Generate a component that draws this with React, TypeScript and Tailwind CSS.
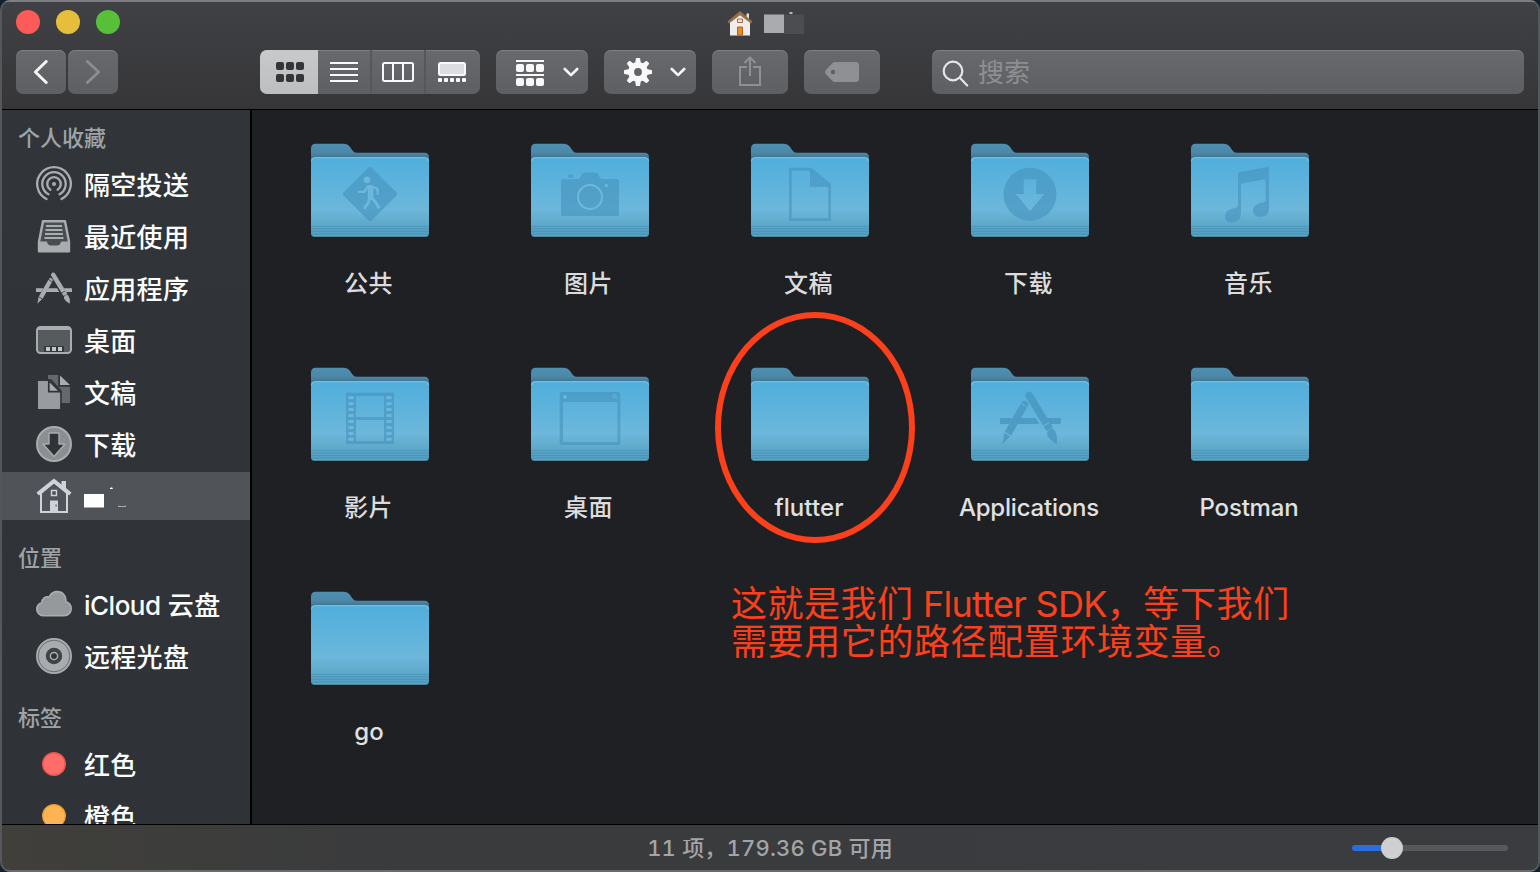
import type { ReactNode } from "react";

const FONT = "font-['Inter','Noto_Sans_CJK_SC',sans-serif]";

/* ---------- toolbar ---------- */

function ToolButton({ className, children }: { className: string; children: ReactNode }) {
  return (
    <div
      className={`flex h-11 shrink-0 items-center overflow-hidden rounded-[7px] bg-linear-to-b from-[#68696c] to-[#5e5f62] shadow-[inset_0_1px_0_#7d7e81] ${className}`}
    >
      {children}
    </div>
  );
}

function ChevronDown() {
  return (
    <svg className="h-4 w-4" viewBox="0 0 16 16" fill="none" stroke="#f6f6f8" strokeWidth="2.6" strokeLinecap="round" strokeLinejoin="round">
      <path d="M1.8 5 8 11.2 14.2 5" />
    </svg>
  );
}

function HouseEmoji() {
  return (
    <svg className="h-[25px] w-[26px]" viewBox="0 0 26 25">
      <path d="M19.500 2.500h2.500v7h-2.500z" fill="#e3e3e3" />
      <path d="M3 11 13 2.500 23 11v13.500H3z" fill="#efeeed" />
      <path d="M13 0 .5 10.500 2 12.600 13 4.200l11 8.400 1.500-2.100z" fill="#94704c" />
      <path d="M10.500 8h5v3.500h-5z" fill="#f4e3d4" stroke="#a8693a" />
      <path d="M10.500 16h5v8h-5z" fill="#e98a2b" stroke="#b1611c" />
    </svg>
  );
}

function GearIcon() {
  const teeth = [0, 45, 90, 135, 180, 225, 270, 315];
  return (
    <svg className="h-7 w-7" viewBox="-14 -14 28 28">
      <g fill="#f8f8fa">
        {teeth.map((a) => (
          <path key={a} d="M-2.9-8.5-2.1-13.4Q-2-14-1.4-14H1.4Q2-14 2.1-13.4L2.9-8.5Z" transform={`rotate(${a})`} />
        ))}
      </g>
      <circle r="6.9" fill="none" stroke="#f8f8fa" strokeWidth="6" />
    </svg>
  );
}

function Toolbar() {
  return (
    <header className="flex h-[108px] shrink-0 flex-col border-b border-black bg-linear-to-b from-[#404144] to-[#363639]">
      <div className="grid h-10 grid-cols-3 items-center">
        <div className="flex gap-4 pl-[14px]">
          <span className="h-6 w-6 rounded-full bg-[#fc5b57]" />
          <span className="h-6 w-6 rounded-full bg-[#e5bf3c]" />
          <span className="h-6 w-6 rounded-full bg-[#57c038]" />
        </div>
        <div className="flex items-center justify-center pt-[2px] pr-[8px]">
          <div className="mr-[10px]">
            <HouseEmoji />
          </div>
          <svg className="h-6 w-[42px]" viewBox="0 0 42 24">
            <path d="M1 3.500h20V22H1z" fill="#aaabaf" />
            <path d="M21 3.500h20V23H21z" fill="#4c4d50" />
            <path d="M26.500 1h3v2h-3z" fill="#b6b7ba" />
          </svg>
        </div>
      </div>
      <div className="flex px-[14px] pt-2">
        <ToolButton className="mr-[2px] w-[50px] justify-center">
          <svg className="h-6 w-4" viewBox="0 0 16 24" fill="none" stroke="#f4f4f5" strokeWidth="3" strokeLinecap="round" strokeLinejoin="round">
            <path d="M13.200 1.500 2.400 12 13.200 22.500" />
          </svg>
        </ToolButton>
        <ToolButton className="mr-[142px] w-[50px] justify-center">
          <svg className="h-6 w-4" viewBox="0 0 16 24" fill="none" stroke="#8c8d90" strokeWidth="2.800" strokeLinecap="round" strokeLinejoin="round">
            <path d="M2.400 1.500 13.600 12 2.400 22.500" />
          </svg>
        </ToolButton>
        <ToolButton className="mr-4 w-[220px]">
          <div className="flex h-full w-[58px] items-center justify-center bg-linear-to-b from-[#c8c9cb] to-[#bdbec0] pl-[2px]">
            <svg className="h-5 w-7" viewBox="0 0 28 20" fill="#343538">
              {[0, 10, 20].map((x) => (
                <g key={x}>
                  <rect x={x} width="8" height="8" rx="2" />
                  <rect x={x} y="12" width="8" height="8" rx="2" />
                </g>
              ))}
            </svg>
          </div>
          <div className="flex h-full w-[54px] items-center justify-center border-r-2 border-[#56575a]">
            <svg className="h-5 w-7" viewBox="0 0 28 20" fill="#f8f8fa">
              <path d="M0 0h28v2H0zM0 6h28v2H0zM0 12h28v2H0zM0 18h28v2H0z" />
            </svg>
          </div>
          <div className="flex h-full w-[54px] items-center justify-center border-r-2 border-[#56575a]">
            <svg className="h-5 w-8" viewBox="0 0 32 20" fill="none" stroke="#f8f8fa" strokeWidth="2">
              <rect x="1" y="1" width="30" height="18" rx="1.500" />
              <path d="M11 1v18M21 1v18" />
            </svg>
          </div>
          <div className="flex h-full w-[52px] items-center justify-center">
            <svg className="h-5 w-7" viewBox="0 0 28 20">
              <rect x="1" y="1" width="26" height="12" rx="1.500" fill="#dcdde0" stroke="#f8f8fa" strokeWidth="2" />
              {[0, 6, 12, 18, 24].map((x) => (
                <rect key={x} x={x} y="16" width="4" height="4" rx="1" fill="#f8f8fa" />
              ))}
            </svg>
          </div>
        </ToolButton>
        <ToolButton className="mr-4 w-[92px] justify-between pl-5 pr-[9px]">
          <svg className="mt-[2px] h-[26px] w-7" viewBox="0 0 28 26" fill="#f8f8fa">
            <path d="M0 0h28v2H0zM0 14h28v2H0z" />
            {[0, 10, 20].map((x) => (
              <g key={x}>
                <rect x={x} y="4" width="8" height="8" rx="2" />
                <rect x={x} y="18" width="8" height="8" rx="2" />
              </g>
            ))}
          </svg>
          <ChevronDown />
        </ToolButton>
        <ToolButton className="mr-4 w-[92px] justify-between pl-5 pr-[10px]">
          <GearIcon />
          <ChevronDown />
        </ToolButton>
        <ToolButton className="mr-4 w-[76px] justify-center">
          <svg className="mb-[2px] h-[30px] w-[22px]" viewBox="0 0 22 30" fill="none" stroke="#8f9093" strokeWidth="2">
            <path d="M8 11H1v18h20V11h-7M11 20V1.500M5.500 7 11 1.500 16.500 7" />
          </svg>
        </ToolButton>
        <ToolButton className="mr-[52px] w-[76px] justify-center">
          <svg className="h-5 w-[34px]" viewBox="0 0 34 20">
            <path d="M10 0h21q3 0 3 3v14q0 3-3 3H10Q8.500 20 7.500 19L.8 12Q-.8 10 .8 8L7.500 1Q8.500 0 10 0z" fill="#8f9093" />
            <circle cx="8" cy="10" r="2.200" fill="#5f6063" />
          </svg>
        </ToolButton>
        <ToolButton className="w-[592px] pl-[10px]">
          <svg className="mt-[2px] h-[27px] w-[27px]" viewBox="0 0 27 27" fill="none" stroke="#e6e6e8" strokeWidth="2.200" strokeLinecap="round">
            <circle cx="11" cy="11" r="9.300" />
            <path d="m17.800 17.800 7.400 7.600" />
          </svg>
          <span className="mt-[2px] ml-[9px] text-[26px] leading-none text-[#8e8f92]">搜索</span>
        </ToolButton>
      </div>
    </header>
  );
}

/* ---------- shared drawing ---------- */

function AppsDrawing() {
  return (
    <g>
      <path d="M30 52h12.500l-3.500 6H30zM50.500 52h15.200l3.500 6H47.200zM76.500 52h14.200v6H79.800z" />
      <path d="M55.600 30.800q-1.200-3 1.800-4.900 3.200-1.400 5 1.500L79.600 55.800l-6.600 3.700z" />
      <path d="m73.600 60.400 6.500-3.700 2.700 4.900-6.200 3.500z" />
      <path d="M77.200 66q3-3.800 6-3.200 5 5.200 3.600 15.200-7.400-4.400-9.600-9z" />
      <path d="m51.600 36.200 1-1.200q2.200-.8 4.600.8 1.600 1.600 1 3.600l-1 1.600z" />
      <path d="m50.900 37.400 6 4.400L41.200 69.400l-6.400-3.700z" />
      <path d="m34.300 66.800 5.800 3.500-7.600 7.400z" />
    </g>
  );
}

/* ---------- sidebar ---------- */

const ICON = "#a9adb0";

const sideIcons: Record<string, ReactNode> = {
  airdrop: (
    <g fill="none" stroke={ICON} strokeWidth="2.300" strokeLinecap="round">
      <circle cx="18" cy="18" r="2" fill={ICON} stroke="none" />
      <path d="M10.500 33A16.800 16.800 0 1 1 25.500 33" />
      <path d="M12.500 28.200A11.700 11.700 0 1 1 23.500 28.200" />
      <path d="M14.400 23.700A6.800 6.800 0 1 1 21.600 23.700" />
    </g>
  ),
  recents: (
    <g>
      <path d="M7 3.200h22l4 20.500v9.500H3v-9.500z" fill="#484d50" stroke={ICON} strokeWidth="2.400" strokeLinejoin="round" />
      <path d="M3 23.500h8q.5 4 4 4h6q3.500 0 4-4h8v9.700H3z" fill={ICON} />
      <path d="M10 8h16M9.500 12h17M9 16h18M8.500 20h19" stroke={ICON} strokeWidth="1.900" />
    </g>
  ),
  apps: (
    <g fill={ICON} transform="translate(-17.800 -12.500) scale(.593)">
      <AppsDrawing />
    </g>
  ),
  desktop: (
    <g>
      <rect x="1" y="5" width="34" height="26" rx="3.500" fill="#565b5e" stroke={ICON} strokeWidth="2" />
      <path d="M2 5.500h32V8H2z" fill={ICON} />
      <path d="M8 24h20v6H8z" fill="#34383b" />
      <path d="M10 25h4v4h-4zM16 25h4v4h-4zM22 25h4v4h-4z" fill="#c4c7c9" />
    </g>
  ),
  documents: (
    <g>
      <path d="M12 1h11v11h11v17H12z" fill="#65696c" />
      <path d="M24 1.500V11h10z" fill={ICON} />
      <path d="M23 0v12h11.500" fill="none" stroke="#303438" strokeWidth="1.500" />
      <path d="M2 7h10l12.500 12v16H2z" fill="#989ca0" />
      <path d="M12.500 6H15l10 11v18" fill="none" stroke="#303438" strokeWidth="1.600" />
      <path d="M12.800 6.500v11.200H24z" fill="#a9adb0" stroke="#303438" strokeWidth="1.700" />
    </g>
  ),
  downloads: (
    <g>
      <circle cx="18" cy="18" r="17" fill="#8b8f92" stroke={ICON} strokeWidth="2" />
      <path d="M13 7h10v11h6L18 30.500 7 18h6z" fill="#303438" stroke={ICON} strokeWidth="1.400" strokeLinejoin="round" />
    </g>
  ),
  home: (
    <g>
      <path d="M25.500 3h4.500v10h-4.500z" fill="#cfd2da" />
      <path d="M5 15v19h26V15L18 4z" fill="#50535a" stroke="#cfd2da" strokeWidth="2" />
      <path d="M18 .5.500 14.500l2.300 3L18 5.500l15.200 12 2.300-3z" fill="#cfd2da" />
      <path d="M15.500 12.500h5v5h-5z" fill="none" stroke="#cfd2da" strokeWidth="1.400" />
      <path d="M14 22.500h8V34h-8z" fill="#cfd2da" />
      <path d="M19.500 26.500h1.200v2h-1.200z" fill="#50535a" />
    </g>
  ),
  cloud: (
    <path
      d="M8 29.800C3.800 29.800.8 26.800.8 23.200c0-3 1.900-5.600 5-6.500C5.800 12.600 9.500 9.800 13.200 11 14.600 7.800 17.800 5.600 21.400 5.600c5.200 0 9 4.300 8.400 10.200 3.300.8 5.400 3.700 5.400 7 0 3.900-3 7-7.200 7z"
      fill="#96999c"
      stroke={ICON}
      strokeWidth="1.600"
    />
  ),
  disc: (
    <g>
      <circle cx="18" cy="18" r="17.200" fill="#a9acaf" stroke={ICON} strokeWidth="1.600" />
      <circle cx="18" cy="18" r="15.800" fill="none" stroke="#64686b" strokeWidth=".9" />
      <circle cx="18" cy="18" r="8.200" fill="#3f4346" />
      <circle cx="18" cy="18" r="3.600" fill="#303438" stroke={ICON} strokeWidth="1.500" />
    </g>
  ),
  red: <circle cx="18" cy="18" r="11.300" fill="#fe6d67" stroke="#ee514c" strokeWidth="1.400" />,
  orange: <circle cx="18" cy="18" r="11.300" fill="#feb453" stroke="#ee9f34" strokeWidth="1.400" />,
};

function Heading({ first, children }: { first?: boolean; children: ReactNode }) {
  return (
    <h2
      className={`flex shrink-0 items-end pb-2 pl-4 text-[22px] leading-7 font-medium text-[#9fa3a6] ${first ? "h-[50px]" : "h-[56px]"}`}
    >
      {children}
    </h2>
  );
}

function SideItem({ icon, selected, children }: { icon: string; selected?: boolean; children: ReactNode }) {
  return (
    <div className={`mb-1 flex h-12 shrink-0 items-center pl-[34px] ${selected ? "bg-[#505358]" : ""}`}>
      <svg className="mr-3 h-9 w-9 shrink-0" viewBox="0 0 36 36">
        {sideIcons[icon]}
      </svg>
      <span className="mt-[3px] text-[26px] leading-none font-medium tracking-[0.3px] whitespace-nowrap text-[#fbfcfc]">
        {children}
      </span>
    </div>
  );
}

function Sidebar() {
  return (
    <aside className="flex w-[250px] shrink-0 flex-col overflow-hidden border-r-2 border-black bg-linear-to-b from-[#313539] to-[#2f3337]">
      <Heading first>个人收藏</Heading>
      <SideItem icon="airdrop">隔空投送</SideItem>
      <SideItem icon="recents">最近使用</SideItem>
      <SideItem icon="apps">应用程序</SideItem>
      <SideItem icon="desktop">桌面</SideItem>
      <SideItem icon="documents">文稿</SideItem>
      <SideItem icon="downloads">下载</SideItem>
      <SideItem icon="home" selected>
        <svg className="h-[26px] w-11" viewBox="0 0 44 26" fill="#fff">
          <path d="M0 9h20v13.500H0zM26 3l2-.8 1 1.800h-3zM34 20.500q4 2.200 8 0v.8q-4 1.400-8 0z" />
        </svg>
      </SideItem>
      <Heading>位置</Heading>
      <SideItem icon="cloud">
        <span className="tracking-[-0.5px]">iCloud</span> 云盘
      </SideItem>
      <SideItem icon="disc">远程光盘</SideItem>
      <Heading>标签</Heading>
      <SideItem icon="red">红色</SideItem>
      <SideItem icon="orange">橙色</SideItem>
    </aside>
  );
}

/* ---------- folders ---------- */

const EMB = "#4795bf";
const EMBO = 0.66;

const emblems: Record<string, ReactNode> = {
  none: null,
  public: (
    <g>
      <path d="M58.500 25.500q1.500-1.500 3 0L86.500 50.500q1.500 1.500 0 3L61.500 78.500q-1.500 1.500-3 0L33.500 53.500q-1.500-1.500 0-3z" fill={EMB} opacity={EMBO} />
      <circle cx="57" cy="37.800" r="3.200" fill="#6cb8dd" />
      <g fill="none" stroke="#6cb8dd" strokeLinecap="round" strokeLinejoin="round">
        <path d="M49 49.800h5.200l3.600-5.300h4l5.600 2.300.4 5" strokeWidth="2.300" />
        <path d="M60.600 45.800v9.200" strokeWidth="5.600" />
        <path d="M59.500 56l-1.200 5-3.600 4.600M62 56l3.500 4.200 3.200 5.400" strokeWidth="2.900" />
      </g>
    </g>
  ),
  pictures: (
    <g>
      <path
        d="M33 37h14q3 0 4-3 1-3.300 4-3.300h10q3 0 4 3.300 1 3 4 3h14q2 0 2 2v33q0 2-2 2H33q-2 0-2-2V39q0-2 2-2zM39 32.700h3.500q1 0 1 1.500t-1 1.500H39q-1 0-1-1.500t1-1.500z"
        fill={EMB}
        opacity={EMBO}
      />
      <circle cx="60" cy="55" r="12" fill="none" stroke="#6cb8dd" strokeWidth="2" />
      <circle cx="76.300" cy="43.600" r="1.600" fill="#6cb8dd" />
    </g>
  ),
  documents: (
    <g fill={EMB} opacity={EMBO}>
      <path fillRule="evenodd" d="M39 25.700h22.500L81 42v37H39zM41.700 28.400v47.900h36.600V47.200q0-2.500-2.500-2.500H60V29.500q0-1.100-1.200-1.100z" />
    </g>
  ),
  downloads: (
    <path
      fillRule="evenodd"
      d="M60 25.800a26.500 26.500 0 1 1 0 53 26.500 26.500 0 1 1 0-53zM53.700 37.300V52h-8L60 69.300 74.300 52h-8V37.300z"
      fill={EMB}
      opacity={EMBO}
    />
  ),
  music: (
    <path
      fillRule="evenodd"
      d="M48 31.800q0-1.200 1.200-1.500L77.500 25q1.500-.3 1.500 1V66q0 8.800-8.500 8.800-7.500 0-7.500-6 0-6.500 9-8.200 3.600-.5 3.600-2.800V37.300L51 41.600V71q0 9-8.500 9.200-7.500 0-7.500-6 0-6.500 9.200-8 3.800-.5 3.800-2.800z"
      fill={EMB}
      opacity={EMBO}
    />
  ),
  movies: (
    <g>
      <path
        fillRule="evenodd"
        d="M36 26.700h48V78H36zM46 30v21h28V30zM46 54v21h28V54z"
        fill={EMB}
        opacity={EMBO}
      />
      {[0, 1, 2, 3, 4, 5, 6, 7].map((i) => (
        <g key={i} fill="#6cb8dd">
          <rect x="38.300" y={30.2 + i * 5.95} width="5.400" height="3" rx=".8" />
          <rect x="76.300" y={30.2 + i * 5.95} width="5.400" height="3" rx=".8" />
        </g>
      ))}
    </g>
  ),
  desktop: (
    <g>
      <path
        fillRule="evenodd"
        d="M32 26h56q2.300 0 2.300 2.300v48.400Q90.300 79 88 79H32q-2.300 0-2.300-2.300V28.300Q29.700 26 32 26zM33 36v40h54.500V36z"
        fill={EMB}
        opacity={EMBO}
      />
      <circle cx="35" cy="31" r="1.900" fill="#6cb8dd" />
      <circle cx="84.400" cy="30.200" r="1.700" fill="none" stroke="#6cb8dd" strokeWidth=".8" />
      <path d="m85.800 31.500 1.800 1.800" stroke="#6cb8dd" strokeWidth="1" />
    </g>
  ),
  apps: (
    <g fill={EMB} opacity=".78">
      <AppsDrawing />
    </g>
  ),
};

function Folder({ emblem, children }: { emblem: string; children: ReactNode }) {
  return (
    <div className="flex h-[224px] w-[220px] flex-col items-center pt-8">
      <svg className="h-24 w-[120px]" viewBox="0 0 120 96">
        <path d="M1 22V6.500Q1 1.700 5.800 1.700H34q3.500 0 5.500 2.600l3 4.200q1.600 2.200 4 2.200h68q4.500 0 4.500 4.500V22z" fill="url(#folder-back)" />
        <rect x="1" y="15.400" width="118" height="79" rx="3.500" fill="url(#folder-front)" />
        <path d="M1.500 19q0-3.300 3.300-3.300h110.400q3.300 0 3.300 3.300" fill="none" stroke="#7fc8ea" strokeWidth="1" />
        <path d="M1 84.500h118M1 87h118M1 89.500h118M1 92h118" stroke="#438fb3" strokeWidth=".9" opacity=".75" />
        <path d="M2.500 94h115" stroke="#6fb4d2" strokeWidth=".8" />
        {emblems[emblem]}
      </svg>
      <div className="mt-[30px] pr-[3px] text-[24px] leading-8 text-[#e1e1e2]">{children}</div>
    </div>
  );
}

function Zh({ children }: { children: ReactNode }) {
  return <span className="font-medium tracking-[0.6px] text-[#dcdcdd]">{children}</span>;
}

function FolderArea() {
  return (
    <main className="relative flex-1 overflow-hidden bg-[#1f2023]">
      <svg className="absolute h-0 w-0">
        <defs>
          <linearGradient id="folder-back" x1="0" y1="0" x2="0" y2="1">
            <stop offset="0" stopColor="#4f8fb0" />
            <stop offset=".45" stopColor="#4c88a8" />
            <stop offset=".7" stopColor="#3f7390" />
            <stop offset="1" stopColor="#3a6d89" />
          </linearGradient>
          <linearGradient id="folder-front" x1="0" y1="0" x2="0" y2="1">
            <stop offset="0" stopColor="#52aedb" />
            <stop offset=".12" stopColor="#55b0dc" />
            <stop offset=".66" stopColor="#6cb7db" />
            <stop offset=".84" stopColor="#5fa9cb" />
            <stop offset="1" stopColor="#539dc0" />
          </linearGradient>
        </defs>
      </svg>
      <div className="grid grid-cols-[repeat(5,220px)] pl-2">
        <Folder emblem="public"><Zh>公共</Zh></Folder>
        <Folder emblem="pictures"><Zh>图片</Zh></Folder>
        <Folder emblem="documents"><Zh>文稿</Zh></Folder>
        <Folder emblem="downloads"><Zh>下载</Zh></Folder>
        <Folder emblem="music"><Zh>音乐</Zh></Folder>
        <Folder emblem="movies"><Zh>影片</Zh></Folder>
        <Folder emblem="desktop"><Zh>桌面</Zh></Folder>
        <Folder emblem="none"><span className="pl-px font-[450] tracking-[0.1px]">flutter</span></Folder>
        <Folder emblem="apps"><span className="pl-px font-[450] tracking-[-0.2px]">Applications</span></Folder>
        <Folder emblem="none"><span className="pl-px font-[450] tracking-[-0.2px]">Postman</span></Folder>
        <Folder emblem="none"><span className="pl-px font-[450]">go</span></Folder>
      </div>
      <div className="absolute top-[202px] left-[463px] h-[231px] w-[200px] rounded-[50%] border-[6px] border-[#fd401c]" />
      <div className="absolute top-[475px] left-[479px] text-[36px] leading-[38px] whitespace-nowrap text-[#fd401c]">
        <p>
          <span className="tracking-[0.5px]">这就是我们</span>
          <span className="tracking-[-0.7px]"> Flutter SDK</span>
          <span className="tracking-[0.6px]">，等下我们</span>
        </p>
        <p className="tracking-[0.6px]">需要用它的路径配置环境变量。</p>
      </div>
    </main>
  );
}

function StatusBar() {
  return (
    <footer className="relative flex h-[46px] shrink-0 items-center justify-center border-t border-black bg-linear-to-r from-[#403f3a] via-[#3a3b3d] via-25% to-[#3b3c3f] text-[22px] font-medium text-[#a3a4a7]">
      <span className="pt-[2px] tracking-[0.2px] tabular-nums">11 项，179.36 GB 可用</span>
      <div className="absolute right-[30px] flex h-[22px] w-[156px] items-center">
        <span className="h-[6px] w-10 rounded-l-full bg-[#2a6ede]" />
        <span className="h-[6px] flex-1 rounded-r-full bg-[#57585a]" />
        <span className="absolute left-[29px] h-[22px] w-[22px] rounded-full bg-[#cfcfd0]" />
      </div>
    </footer>
  );
}

export default function App() {
  return (
    <div className="h-[872px] w-[1540px] bg-[#15202a]">
      <div className={`flex h-full w-full flex-col overflow-hidden rounded-[10px] bg-[#55585a] ${FONT}`}>
        <div className="h-[2px] shrink-0 bg-[#7c7e81]" />
        <div className="mx-[2px] flex min-h-0 flex-1 flex-col overflow-hidden rounded-[8px]">
          <Toolbar />
          <div className="flex min-h-0 flex-1">
            <Sidebar />
            <FolderArea />
          </div>
          <StatusBar />
        </div>
        <div className="h-[2px] shrink-0 bg-[#6a6b6c]" />
      </div>
    </div>
  );
}
